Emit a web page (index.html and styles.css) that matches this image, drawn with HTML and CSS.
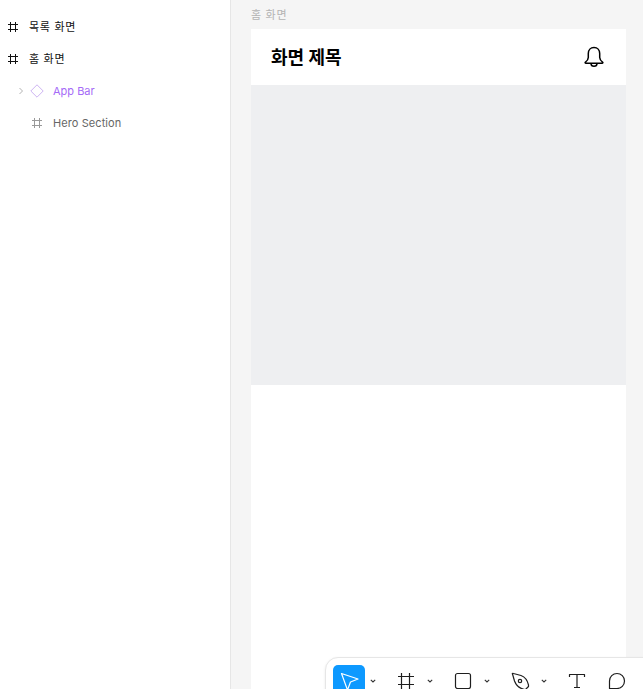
FILE: index.html
```html
<!DOCTYPE html>
<html lang="ko">
<head>
<meta charset="utf-8">
<title>홈 화면</title>
<link rel="stylesheet" href="styles.css">
</head>
<body>
<div class="app">
  <aside class="layers">
    <div class="row">
      <svg class="frame-icon" viewBox="0 0 10 10"><path d="M2.500 0v10M7.500 0v10M0 2.500h10M0 7.500h10"/></svg>
      <span class="name ko">목록 화면</span>
    </div>
    <div class="row">
      <svg class="frame-icon" viewBox="0 0 10 10"><path d="M2.500 0v10M7.500 0v10M0 2.500h10M0 7.500h10"/></svg>
      <span class="name ko">홈 화면</span>
    </div>
    <div class="row child component">
      <svg class="chevron" viewBox="0 0 6 8"><path d="M1.500 1l3 3-3 3"/></svg>
      <svg class="diamond" viewBox="0 0 14 14"><path d="M7 .8L13.200 7 7 13.200.8 7z"/></svg>
      <span class="name">App Bar</span>
    </div>
    <div class="row child muted">
      <svg class="frame-icon" viewBox="0 0 10 10"><path d="M2.500 0v10M7.500 0v10M0 2.500h10M0 7.500h10"/></svg>
      <span class="name hero-name">Hero Section</span>
    </div>
  </aside>
  <main class="canvas">
    <div class="frame-label">홈 화면</div>
    <section class="frame">
      <header class="appbar">
        <h1 class="title">화면 제목</h1>
        <svg class="bell" viewBox="0 0 22 22"><path d="M11 1.500C7.500 1.500 5.300 4 5.300 7.500V11.500C5.300 13.500 4 15 2.200 16.300C2 16.800 2.200 17.300 2.800 17.300H19.200C19.800 17.300 20 16.800 19.800 16.300C18 15 16.700 13.500 16.700 11.500V7.500C16.700 4 14.500 1.500 11 1.500Z"/><path d="M8 17.500C8 19.300 9.300 20.300 11 20.300S14 19.300 14 17.500"/></svg>
      </header>
      <div class="hero"></div>
    </section>
  </main>
  <nav class="toolbar">
    <span class="tool active">
      <svg viewBox="0 0 32 32"><path d="M8.500 8.500L25 14 17.500 17 14.500 25Z"/></svg>
    </span>
    <svg class="caret" viewBox="0 0 6 4"><path d="M.8.8L3 3 5.200.8"/></svg>
    <span class="tool">
      <svg viewBox="0 0 32 32"><path d="M11.500 8v16M19.500 8v16M8 11.500h16M8 19.500h16"/></svg>
    </span>
    <svg class="caret" viewBox="0 0 6 4"><path d="M.8.8L3 3 5.200.8"/></svg>
    <span class="tool">
      <svg viewBox="0 0 32 32"><rect x="8.500" y="8.500" width="15" height="15" rx="2"/></svg>
    </span>
    <svg class="caret" viewBox="0 0 6 4"><path d="M.8.8L3 3 5.200.8"/></svg>
    <span class="tool">
      <svg viewBox="0 0 32 32"><path d="M8.500 9C8 8.500 8.500 8 9.500 8.500L17 10.500C21 12 23.500 15.500 24.500 20L24.500 21.500L22 24L20.500 24.500C15.500 23.500 12 20 10.500 16Z"/><circle cx="16" cy="16" r="1.700"/></svg>
    </span>
    <svg class="caret" viewBox="0 0 6 4"><path d="M.8.8L3 3 5.200.8"/></svg>
    <span class="tool">
      <svg viewBox="0 0 32 32"><path d="M8.500 12V9.500H23.500V12M16 9.500V22.500M13 22.500H19"/></svg>
    </span>
    <span class="tool comment-tool">
      <svg viewBox="0 0 32 32"><path d="M16 8.500A7.500 7.500 0 1 1 16 23.500H8.500V16A7.500 7.500 0 0 1 16 8.500Z"/></svg>
    </span>
  </nav>
</div>
</body>
</html>
```
FILE: styles.css
```css
* {
  box-sizing: border-box;
}

html,
body {
  margin: 0;
  height: 100%;
  overflow: hidden;
}

body {
  font-family: Inter, "Noto Sans CJK KR", sans-serif;
  background: #f5f5f5;
}

.app {
  position: relative;
  display: flex;
  height: 689px;
  overflow: hidden;
}

.layers {
  flex: 0 0 231px;
  padding-top: 11px;
  background: #fff;
  border-right: 1px solid #e6e6e6;
}

.row {
  display: flex;
  align-items: center;
  height: 32px;
  padding-left: 8px;
  gap: 11px;
  font-size: 11px;
  color: #111;
}

.ko {
  padding-bottom: 2px;
  letter-spacing: 0.7px;
}

.hero-name {
  letter-spacing: 0.08px;
}

.frame-icon {
  flex: none;
  width: 10px;
  height: 10px;
  fill: none;
  stroke: currentColor;
  stroke-width: 1;
}

.child {
  padding-left: 32px;
}

.component {
  padding-left: 18px;
  gap: 0;
  color: #a56bf7;
}

.chevron {
  flex: none;
  width: 6px;
  height: 8px;
  fill: none;
  stroke: #b3b3b3;
  stroke-width: 1;
}

.diamond {
  flex: none;
  width: 14px;
  height: 14px;
  margin: 0 9px 0 6px;
  fill: none;
  stroke: #cdb4f2;
  stroke-width: 1;
}

.muted {
  color: #666;
}

.muted .frame-icon {
  color: #999;
}

.canvas {
  flex: 1;
  padding: 8px 17px 0 20px;
  min-width: 0;
}

.frame-label {
  height: 21px;
  font-size: 11px;
  line-height: 14px;
  letter-spacing: 0.7px;
  color: #b3b3b3;
}

.frame {
  height: 700px;
  background: #fff;
}

.appbar {
  display: flex;
  align-items: center;
  justify-content: space-between;
  height: 56px;
  padding: 0 21px 0 20px;
}

.title {
  margin: 0;
  padding-bottom: 2px;
  font-size: 18px;
  font-weight: 700;
  color: #000;
}

.bell {
  width: 22px;
  height: 22px;
  fill: none;
  stroke: #000;
  stroke-width: 1.500;
  stroke-linejoin: round;
}

.hero {
  height: 300px;
  background: #eeeff1;
}

.toolbar {
  position: absolute;
  left: 325px;
  top: 657px;
  display: flex;
  width: 340px;
  height: 48px;
  padding: 7px;
  background: #fff;
  border: 1px solid #e6e6e6;
  border-radius: 13px;
  box-shadow: 0 1px 3px rgba(0, 0, 0, 0.08);
}

.tool {
  flex: none;
  width: 32px;
  height: 32px;
  border-radius: 5px;
}

.tool svg {
  display: block;
  width: 32px;
  height: 32px;
  fill: none;
  stroke: #1e1e1e;
  stroke-width: 1.200;
  stroke-linejoin: round;
}

.tool.active {
  background: #0d99ff;
}

.tool.active svg {
  stroke: #fff;
}

.caret {
  flex: none;
  width: 6px;
  height: 4px;
  margin: 14px 14px 0 5px;
  fill: none;
  stroke: #333;
  stroke-width: 1.100;
}

.comment-tool {
  margin-left: 8px;
}
```
